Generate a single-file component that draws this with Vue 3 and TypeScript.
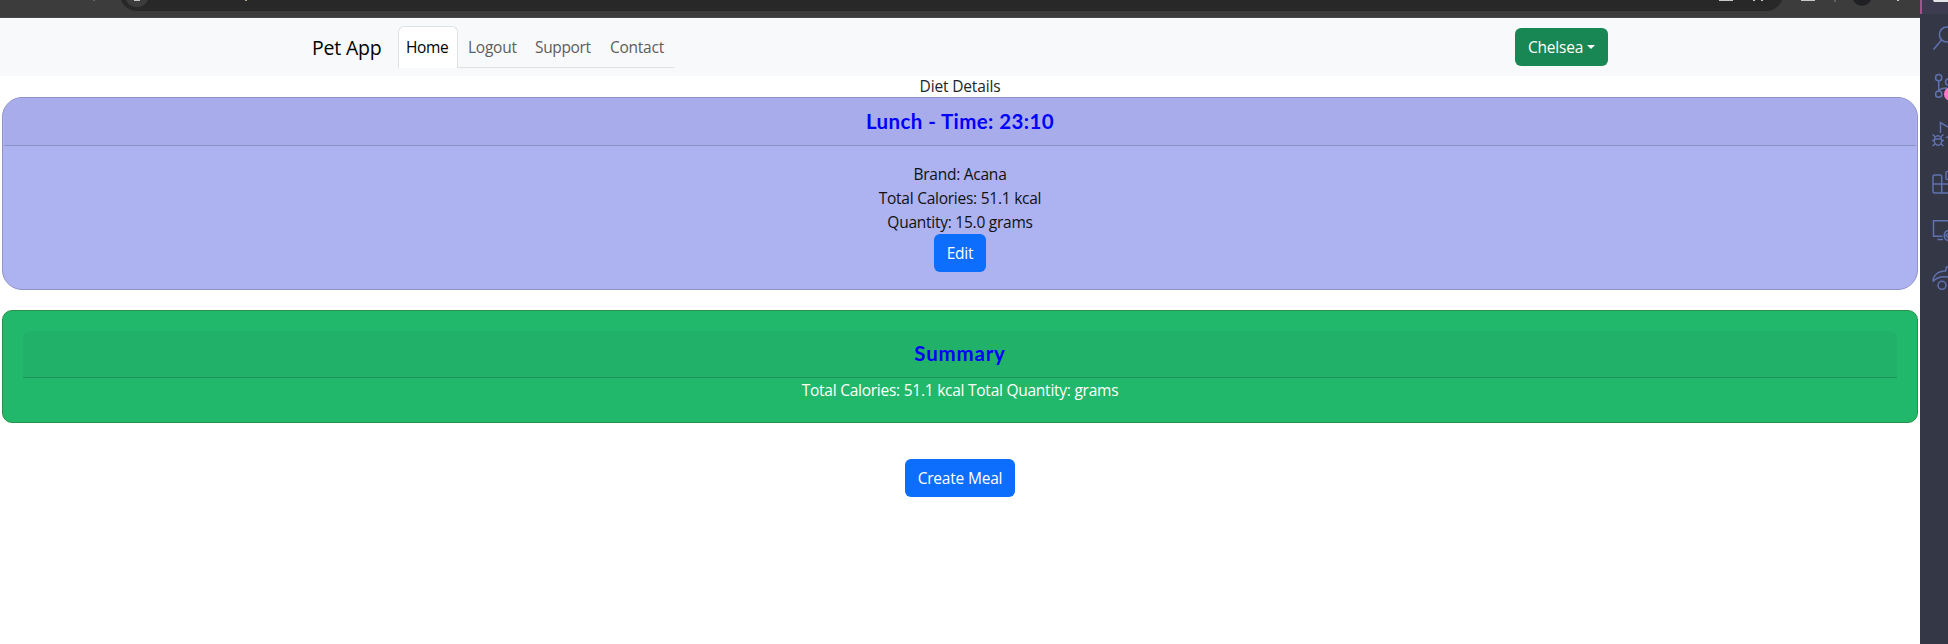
<script setup lang="ts">
interface NavItem {
  label: string
  cls: string
}
const navItems: NavItem[] = [
  { label: 'Home', cls: 'home' },
  { label: 'Logout', cls: 'logout' },
  { label: 'Support', cls: 'support' },
  { label: 'Contact', cls: 'contact' },
]
</script>

<template>
  <div class="screen">
    <div class="browser">
      <svg class="chrome" width="1920" height="18" viewBox="0 0 1920 18">
        <rect width="1920" height="18" fill="#3c3c3c" />
        <rect y="17" width="1920" height="1" fill="#474a4d" />
        <path d="M121 0C123 6 129 11 137 11H1766C1774 11 1780 6 1782 0Z" fill="#282828" />
        <path d="M126 0a12 12 0 0 0 22 0Z" fill="#3c3c3c" />
        <path d="M134 0h6v1h-6zM1719 0h14v1h-14zM1801 0h14v1h-14zM1897 0h2v1h-2zM1753 0h2v1h-2zM1761 0h2v1h-2z" fill="#c7c7c7" />
        <path d="M93 0h2v1h-2zM1834 0h2v2h-2z" fill="#626262" />
        <path d="M245 0h2v1h-2z" fill="#b8a878" />
        <path d="M1853 0a10 10 0 0 0 18 0Z" fill="#202124" />
      </svg>

      <nav class="navbar">
        <a class="brand"><span>Pet App</span></a>
        <ul class="tabs">
          <li v-for="item in navItems" :key="item.label" :class="['tab', item.cls]">
            <span>{{ item.label }}</span>
          </li>
        </ul>
        <button class="btn user"><span>Chelsea</span><i class="caret" /></button>
      </nav>

      <main>
        <div class="title"><span>Diet Details</span></div>
        <section class="meal">
          <h2 class="meal-head"><span>Lunch - Time: 23:10</span></h2>
          <div class="meal-body">
            <p><span>Brand: Acana</span></p>
            <p><span>Total Calories: 51.1 kcal</span></p>
            <p><span>Quantity: 15.0 grams</span></p>
            <button class="btn edit"><span>Edit</span></button>
          </div>
        </section>
        <section class="summary">
          <h2 class="summary-head"><span>Summary</span></h2>
          <p><span>Total Calories: 51.1 kcal Total Quantity: grams</span></p>
        </section>
        <button class="btn create"><span>Create Meal</span></button>
      </main>
    </div>

    <svg class="activity" width="28" height="644" viewBox="0 0 28 644">
      <rect width="28" height="644" fill="#343746" />
      <rect width="28" height="14" fill="#3d3b50" />
      <rect width="2" height="14" fill="#a35490" />
      <path d="M13 0h15v2H14Z" fill="#e4e4e8" />
      <g fill="none" stroke="#6072b0" stroke-width="1.5">
        <circle cx="27" cy="34.5" r="7.6" />
        <path d="M21.5 40 13.5 49.5" />
        <circle cx="18.7" cy="77.7" r="3.1" />
        <circle cx="18.7" cy="94.2" r="3.1" />
        <circle cx="28.6" cy="82" r="3.1" />
        <path d="M18.7 81v10M19 91c1-2.5 3-3 8-3" />
        <path d="M20.5 133v-10.500L28 127M26 138l2-1.500" />
        <ellipse cx="18" cy="140.500" rx="3.700" ry="4.800" />
        <path d="M14 139h8M12.500 134.500l3 2.500M23.500 134.500l-3 2.500M12 140.500h2.500M21.500 140.500H24M12.500 146l3-2.500M23.500 146l-3-2.500" />
        <path d="M28 193H14.500q-1.500 0-1.500-1.500V176.500q0-1.500 1.500-1.500H20q1.700 0 1.700 1.500V193M13 184h15M28 171.500h-1q-1 0-1 1v6q0 1 1 1h1" />
        <path d="M28 220.700H13.500v15.600h9M17.500 239.500h5.500" />
        <path d="M28 230.500c-5 1.500-5 8.500 0 10M28 233.500l-2 2 2 2" />
        <path d="M13 281.500c0-6 5-10.500 12.500-10.500l1-4H28M13 281.500c3-3.500 8-5.500 15-4.500" />
        <circle cx="22" cy="285.300" r="4" />
      </g>
      <circle cx="31" cy="94" r="7" fill="#ff79c6" />
    </svg>
  </div>
</template>

<style>
body {
  margin: 0;
  background: #fff;
}
</style>

<style scoped>
.screen {
  display: flex;
  width: 1948px;
  height: 644px;
  overflow: hidden;
  background: #fff;
  color: #212529;
  font: 15.5px/24px "Open Sans", "Noto Sans", sans-serif;
  letter-spacing: -0.25px;
}
.browser { width: 1920px; }
.chrome, .activity { display: block; flex: none; }
span { white-space: nowrap; }
.navbar {
  display: flex;
  align-items: center;
  box-sizing: border-box;
  height: 58px;
  padding: 0 312px;
  background: #f8f9fa;
}
.brand {
  width: 86px;
  padding-top: 1px;
  font-size: 19.5px;
  line-height: 30px;
  color: #000;
  letter-spacing: -0.2px;
}
.tabs {
  display: flex;
  box-sizing: border-box;
  width: 276px;
  height: 42px;
  margin: 0;
  padding: 0;
  list-style: none;
  border-bottom: 1px solid #dee2e6;
}
.tab {
  box-sizing: border-box;
  height: 42px;
  padding: 9px 0 0 9px;
  color: #5c5d5e;
}
.home {
  width: 60px;
  padding: 8px 0 0 7px;
  color: #000;
  background: #fff;
  border: 1px solid #dee2e6;
  border-bottom: 0;
  border-radius: 6px 6px 0 0;
  letter-spacing: -0.4px;
}
.logout { width: 68px; padding-left: 10px; }
.support { width: 75px; letter-spacing: -0.35px; }
.contact { width: 73px; }
.btn {
  display: flex;
  align-items: center;
  justify-content: center;
  box-sizing: border-box;
  height: 38px;
  padding: 0;
  border: 0;
  border-radius: 6px;
  background: #0d6efd;
  color: #fff;
  font: inherit;
  letter-spacing: -0.2px;
}
.user {
  width: 93px;
  margin-left: auto;
  background: #198754;
}
.caret {
  margin-left: 4px;
  border: 4.500px solid transparent;
  border-top-color: #fff;
  border-bottom: 0;
}
main { text-align: center; }
p { margin: 0; }
.title {
  height: 21px;
  line-height: 20px;
  letter-spacing: -0.15px;
}
h2 {
  margin: 0;
  font: 700 20.5px/30px Lato, "Open Sans", sans-serif;
  color: #00f;
}
.meal {
  box-sizing: border-box;
  height: 193px;
  margin: 0 2px;
  border: 1px solid #8f93c6;
  border-radius: 20px;
  background: #adb2f1;
  overflow: hidden;
  color: #111;
}
.meal-head {
  box-sizing: border-box;
  height: 48px;
  margin: 0 1px;
  padding-top: 8px;
  background: #a8acea;
  border-bottom: 1px solid #8c90c4;
  letter-spacing: 0.4px;
}
.meal-body { padding-top: 16px; }
.edit { width: 52px; margin: 0 auto; }
.summary {
  box-sizing: border-box;
  height: 113px;
  margin: 20px 2px 0;
  padding: 20px;
  border: 1px solid #2b9347;
  border-radius: 10px;
  background: #22b86b;
  color: #fff;
}
.summary-head {
  box-sizing: border-box;
  height: 47px;
  padding-top: 7px;
  background: #22b168;
  border-bottom: 1px solid #199158;
  border-radius: 6px 6px 0 0;
  letter-spacing: 0.8px;
}
.create {
  width: 110px;
  margin: 36px auto 0;
}
</style>
